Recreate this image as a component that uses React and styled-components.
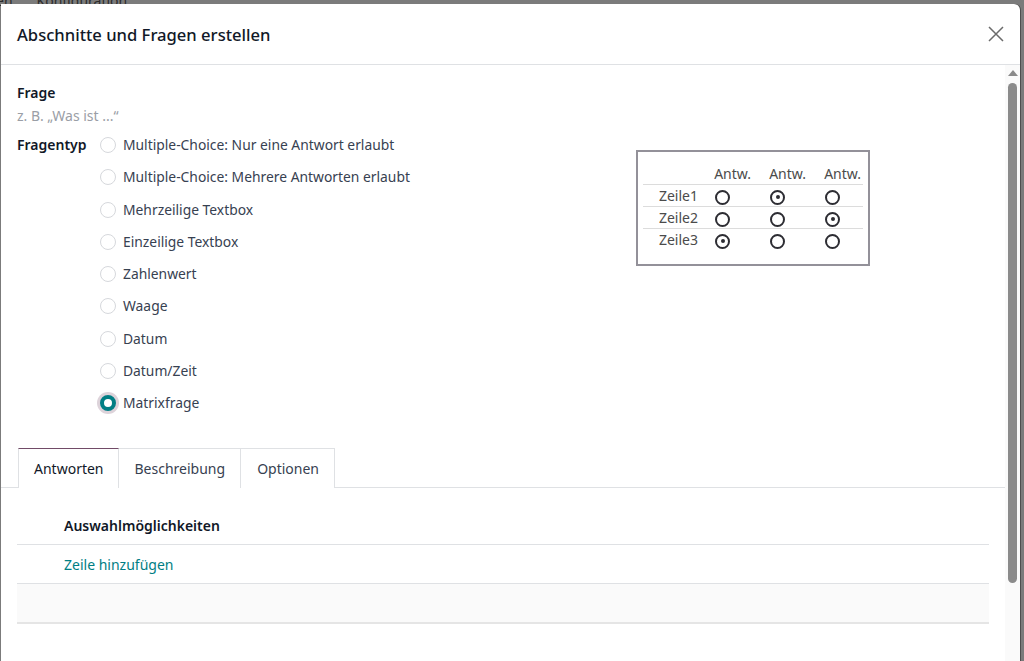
import styled, { createGlobalStyle } from "styled-components";

const GlobalStyle = createGlobalStyle`
  html, body {
    margin: 0;
    padding: 0;
    background: #7a7a7a;
    font-family: "Noto Sans", "Open Sans", sans-serif;
    overflow: hidden;
  }
`;

const Page = styled.div`
  position: relative;
  width: 1024px;
  height: 661px;
  overflow: hidden;
  background: #7b7b7b;
`;

// the app bar behind the dialog, only its bottom edge peeks out
const BackNav = styled.div`
  display: flex;
  height: 12px;
  margin-top: -9px;
  font-size: 14px;
  color: #2c2c2c;
  span:first-child {
    margin-left: -4px;
  }
  span:last-child {
    margin-left: 24px;
  }
`;

const Modal = styled.div`
  position: absolute;
  top: 4px;
  left: 1px;
  right: 4px;
  bottom: 0;
  background: #fff;
  border-top-right-radius: 6px;
  display: flex;
  flex-direction: column;
  box-shadow: 1px 0 0 #4e4e4e;
`;

const Header = styled.header`
  height: 60px;
  flex-shrink: 0;
  display: flex;
  align-items: center;
  justify-content: space-between;
  padding: 0 16px;
  border-bottom: 1px solid #dfe1e4;
`;

const Title = styled.h4`
  margin: 0;
  font-size: 16.6px;
  font-weight: 500;
  color: #111827;
`;

const CloseButton = styled.button`
  border: none;
  background: none;
  padding: 0;
  width: 16px;
  height: 16px;
  color: #6b6b6b;
  display: flex;
`;

const BodyRow = styled.div`
  flex: 1;
  display: flex;
  min-height: 0;
`;

const Content = styled.div`
  flex: 1;
  min-width: 0;
  display: flex;
  flex-direction: column;
`;

const Scrollbar = styled.div`
  width: 15px;
  flex-shrink: 0;
  background: #fafafa;
  display: flex;
  flex-direction: column;
  align-items: center;
  padding-top: 5px;
  gap: 7px;
`;

const ScrollArrow = styled.div`
  width: 0;
  height: 0;
  border-left: 5px solid transparent;
  border-right: 5px solid transparent;
  border-bottom: 6px solid #8a8a8a;
`;

const ScrollThumb = styled.div`
  width: 9px;
  height: 500px;
  border-radius: 5px;
  background: #8b8b8b;
`;

const Sheet = styled.div`
  display: flex;
  padding: 18px 16px 0 16px;
`;

const Fields = styled.div`
  flex: 1;
`;

const FieldLabel = styled.div`
  font-size: 14px;
  font-weight: 600;
  color: #111827;
  line-height: 20px;
`;

const Placeholder = styled.div`
  font-size: 14px;
  color: #9a9ea6;
  line-height: 20px;
  margin-top: 3px;
`;

const TypeRow = styled.div`
  display: flex;
  margin-top: 9px;
`;

const TypeLabel = styled(FieldLabel)`
  width: 83px;
`;

const RadioList = styled.div`
  display: flex;
  flex-direction: column;
  gap: 12.3px;
`;

const RadioItem = styled.label`
  display: flex;
  align-items: center;
  gap: 7px;
  font-size: 13.85px;
  line-height: 20px;
  color: #374151;
`;

const RadioDot = styled.span`
  width: 16px;
  height: 16px;
  box-sizing: border-box;
  border-radius: 50%;
  border: ${(p) => (p.$checked ? "4px solid #017e84" : "1px solid #d6d8dc")};
  background: #fff;
  box-shadow: ${(p) => (p.$checked ? "0 0 0 3px #ddd3da" : "none")};
`;

const PreviewWrap = styled.div`
  width: 480px;
  padding-top: 67px;
  display: flex;
`;

const PreviewBox = styled.div`
  margin-left: 127px;
  width: 234px;
  height: 116px;
  box-sizing: border-box;
  border: 2px solid #939199;
  padding: 12px 5px 0 5px;
`;

const MatrixTable = styled.table`
  width: 220px;
  table-layout: fixed;
  border-collapse: collapse;
  font-size: 14px;
  color: #4b4b4b;
  col {
    width: 55px;
  }
  th {
    font-weight: 400;
    text-align: right;
    padding: 0 2px 0 0;
    line-height: 20px;
  }
  td {
    height: 21px;
    padding: 0 0 0 17px;
    text-align: left;
    border-top: 1px solid #dcdcdc;
  }
  td:first-child {
    text-align: right;
    padding: 0;
  }
`;

const MiniRadio = styled.span`
  display: inline-block;
  width: 15px;
  height: 15px;
  box-sizing: border-box;
  border-radius: 50%;
  border: 2px solid #2d2d33;
  vertical-align: middle;
  position: relative;
  &::after {
    content: "";
    display: ${(p) => (p.$on ? "block" : "none")};
    position: absolute;
    left: 3.5px;
    top: 3.5px;
    width: 4px;
    height: 4px;
    border-radius: 50%;
    background: #2d2d33;
  }
`;

const Tabs = styled.div`
  display: flex;
  margin-top: 35px;
  padding-left: 17px;
  border-bottom: 1px solid #dfe1e4;
`;

const Tab = styled.div`
  height: 40px;
  padding: 0 15px 0 16px;
  box-sizing: border-box;
  display: flex;
  align-items: center;
  font-size: 14px;
  color: ${(p) => (p.$active ? "#111827" : "#374151")};
  border: 1px solid #dfe1e4;
  border-top-color: ${(p) => (p.$active ? "#714b67" : "#dfe1e4")};
  border-bottom: none;
  margin-bottom: -1px;
  background: #fff;
  &:first-child {
    padding: 0 14px 0 15px;
  }
  & + & {
    border-left: none;
  }
`;

const ListBlock = styled.div`
  margin: 18px 16px 0 16px;
`;

const ListRow = styled.div`
  height: 38px;
  display: flex;
  align-items: center;
  padding-left: 47px;
  font-size: 14px;
  border-bottom: ${(p) => (p.$thick ? "2px solid #e5e5e5" : "1px solid #dfe1e4")};
  background: ${(p) => (p.$muted ? "#fafafa" : "#fff")};
`;

const ColumnTitle = styled.span`
  font-weight: 600;
  color: #111827;
`;

const AddLink = styled.a`
  color: #017e84;
  text-decoration: none;
`;

const types = [
  "Multiple-Choice: Nur eine Antwort erlaubt",
  "Multiple-Choice: Mehrere Antworten erlaubt",
  "Mehrzeilige Textbox",
  "Einzeilige Textbox",
  "Zahlenwert",
  "Waage",
  "Datum",
  "Datum/Zeit",
  "Matrixfrage",
];

const matrix = [
  ["Zeile1", 1],
  ["Zeile2", 2],
  ["Zeile3", 0],
];

export default function App() {
  return (
    <Page>
      <GlobalStyle />
      <BackNav>
        <span>en</span>
        <span>Konfiguration</span>
      </BackNav>
      <Modal>
        <Header>
          <Title>Abschnitte und Fragen erstellen</Title>
          <CloseButton aria-label="Schließen">
            <svg width="16" height="16" viewBox="0 0 16 16">
              <path d="M1 1 L15 15 M15 1 L1 15" stroke="currentColor" strokeWidth="1.5" />
            </svg>
          </CloseButton>
        </Header>
        <BodyRow>
          <Content>
            <Sheet>
              <Fields>
                <FieldLabel>Frage</FieldLabel>
                <Placeholder>z. B. „Was ist ...“</Placeholder>
                <TypeRow>
                  <TypeLabel>Fragentyp</TypeLabel>
                  <RadioList>
                    {types.map((t) => (
                      <RadioItem key={t}>
                        <RadioDot $checked={t === "Matrixfrage"} />
                        {t}
                      </RadioItem>
                    ))}
                  </RadioList>
                </TypeRow>
              </Fields>
              <PreviewWrap>
                <PreviewBox>
                  <MatrixTable>
                    <colgroup>
                      <col />
                      <col />
                      <col />
                      <col />
                    </colgroup>
                    <thead>
                      <tr>
                        <th />
                        <th>Antw.</th>
                        <th>Antw.</th>
                        <th>Antw.</th>
                      </tr>
                    </thead>
                    <tbody>
                      {matrix.map(([row, on]) => (
                        <tr key={row}>
                          <td>{row}</td>
                          {[0, 1, 2].map((i) => (
                            <td key={i}>
                              <MiniRadio $on={i === on} />
                            </td>
                          ))}
                        </tr>
                      ))}
                    </tbody>
                  </MatrixTable>
                </PreviewBox>
              </PreviewWrap>
            </Sheet>
            <Tabs>
              <Tab $active>Antworten</Tab>
              <Tab>Beschreibung</Tab>
              <Tab>Optionen</Tab>
            </Tabs>
            <ListBlock>
              <ListRow>
                <ColumnTitle>Auswahlmöglichkeiten</ColumnTitle>
              </ListRow>
              <ListRow>
                <AddLink href="#">Zeile hinzufügen</AddLink>
              </ListRow>
              <ListRow $muted $thick />
            </ListBlock>
          </Content>
          <Scrollbar>
            <ScrollArrow />
            <ScrollThumb />
          </Scrollbar>
        </BodyRow>
      </Modal>
    </Page>
  );
}
